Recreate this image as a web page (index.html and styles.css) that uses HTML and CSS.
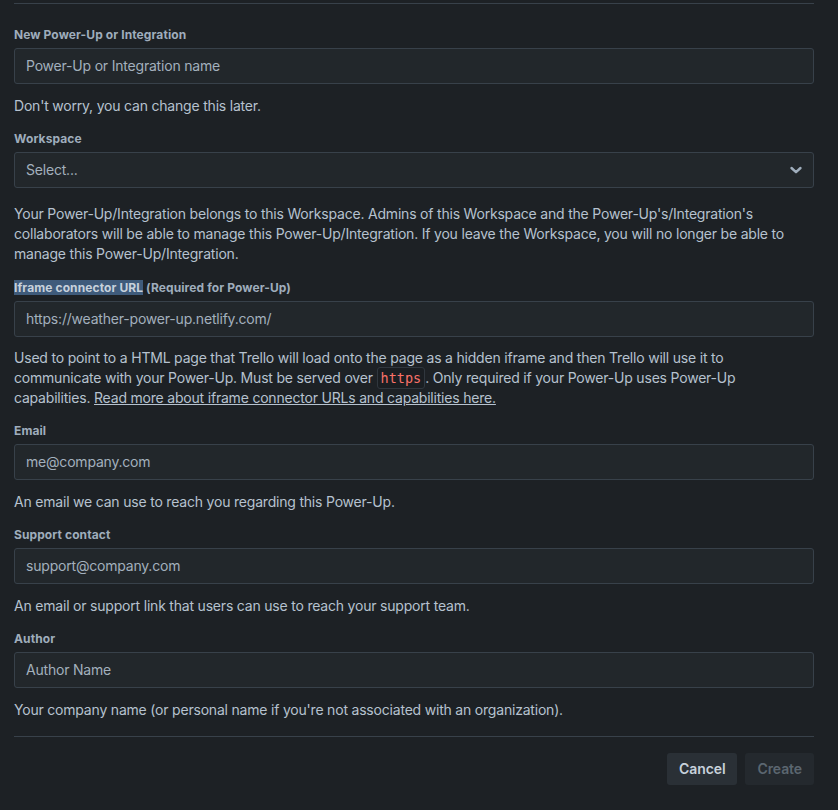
FILE: index.html
```html
<!DOCTYPE html>
<html lang="en">
<head>
<meta charset="utf-8">
<title>New Power-Up or Integration</title>
<link rel="stylesheet" href="styles.css">
</head>
<body>
<div class="page">
  <div class="top-rule"></div>
  <form class="form">
    <div class="field">
      <label class="label">New Power-Up or Integration</label>
      <div class="input">Power-Up or Integration name</div>
      <p class="help">Don't worry, you can change this later.</p>
    </div>

    <div class="field">
      <label class="label">Workspace</label>
      <div class="input select">
        <span>Select...</span>
        <svg class="chevron" width="14" height="14" viewBox="0 0 14 14" aria-hidden="true">
          <path d="M2.5 5 L7 9.2 L11.5 5" fill="none" stroke="currentColor" stroke-width="2.4" stroke-linecap="round" stroke-linejoin="round"/>
        </svg>
      </div>
      <p class="help help-wide">Your Power-Up/Integration belongs to this Workspace. Admins of this Workspace and the Power-Up's/Integration's collaborators will be able to manage this Power-Up/Integration. If you leave the Workspace, you will no longer be able to manage this Power-Up/Integration.</p>
    </div>

    <div class="field field-wide">
      <label class="label"><span class="selected">Iframe connector URL</span> (Required for Power-Up)</label>
      <div class="input">https://weather-power-up.netlify.com/</div>
      <p class="help help-tight">Used to point to a HTML page that Trello will load onto the page as a hidden iframe and then Trello will use it to communicate with your Power-Up. Must be served over <code class="code">https</code>. Only required if your Power-Up uses Power-Up capabilities. <a class="link" href="#">Read more about iframe connector URLs and capabilities here.</a></p>
    </div>

    <div class="field">
      <label class="label">Email</label>
      <div class="input">me@company.com</div>
      <p class="help">An email we can use to reach you regarding this Power-Up.</p>
    </div>

    <div class="field">
      <label class="label">Support contact</label>
      <div class="input">support@company.com</div>
      <p class="help">An email or support link that users can use to reach your support team.</p>
    </div>

    <div class="field">
      <label class="label">Author</label>
      <div class="input">Author Name</div>
      <p class="help">Your company name (or personal name if you're not associated with an organization).</p>
    </div>

    <div class="divider"></div>

    <div class="actions">
      <button type="button" class="btn btn-cancel">Cancel</button>
      <button type="button" class="btn btn-create" disabled>Create</button>
    </div>
  </form>
</div>
</body>
</html>
```

FILE: styles.css
```css
html, body {
  margin: 0;
  padding: 0;
  background: #1d2125;
}

body {
  font-family: "Inter", "Noto Sans", "Liberation Sans", sans-serif;
  font-size: 14px;
  line-height: 20px;
  letter-spacing: -0.2px;
  color: #b6c2cf;
}

.page {
  padding: 0 24px 0 14px;
}

.top-rule {
  padding-top: 3px;
  border-bottom: 1px solid #38414a;
}

.form {
  display: flex;
  flex-direction: column;
  margin: 0;
  padding-top: 23px;
}

.field {
  display: flex;
  flex-direction: column;
  margin-bottom: 15px;
}

.field-wide {
  margin-top: 1px;
}

.label {
  display: block;
  font-size: 12px;
  line-height: 16px;
  font-weight: 700;
  letter-spacing: 0.1px;
  color: #9fadbc;
  margin-bottom: 5px;
}

.selected {
  background: #3f5b7b;
  color: #c7d1db;
}

.input {
  box-sizing: border-box;
  height: 36px;
  display: flex;
  align-items: center;
  padding: 0 11px;
  background: #22272b;
  border: 1px solid #38414a;
  border-radius: 3px;
  color: #a3b0bd;
}

.select {
  justify-content: space-between;
  padding-right: 10px;
}

.chevron {
  color: #9fadbc;
}

.help {
  margin: 12px 0 0;
}

.help-wide {
  margin-top: 16px;
}

.help-tight {
  margin-top: 11px;
}

.code {
  font-family: "DejaVu Sans Mono", "Liberation Mono", monospace;
  font-size: 13.5px;
  line-height: 1;
  letter-spacing: 0;
  color: #f87168;
  background: #1a1e22;
  border: 1px solid #30373e;
  border-radius: 3px;
  padding: 2px 3px;
}

.link {
  color: #b6c2cf;
  text-decoration: underline;
}

.divider {
  margin-top: 1px;
  border-top: 1px solid #38414a;
}

.actions {
  display: flex;
  justify-content: flex-end;
  gap: 8px;
  margin-top: 16px;
}

.btn {
  font-family: inherit;
  font-size: 14px;
  font-weight: 600;
  line-height: 20px;
  letter-spacing: -0.1px;
  height: 32px;
  padding: 0 12px;
  border: none;
  border-radius: 3px;
}

.btn-cancel {
  background: #2a3036;
  color: #c7d1db;
}

.btn-create {
  background: #24292e;
  color: #5b6670;
}
```
